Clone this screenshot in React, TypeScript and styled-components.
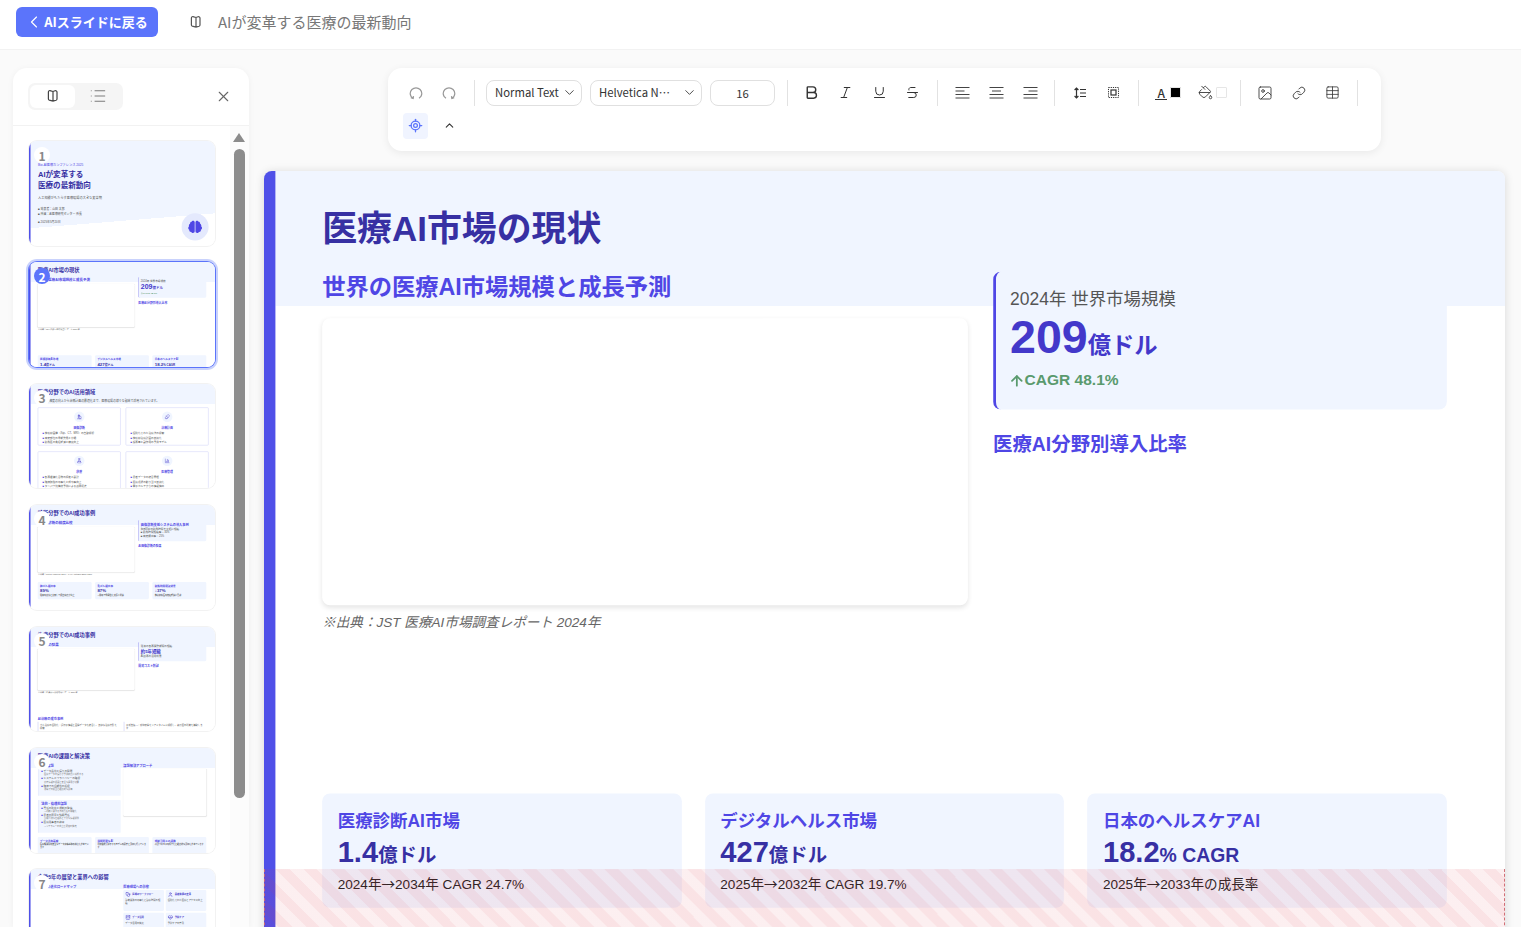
import React from "react";
import styled, { createGlobalStyle } from "styled-components";
import {
  ArrowUp, Bold, ChevronDown, ChevronLeft, ChevronUp, Italic,
  Link, List, LocateFixed, PaintBucket, Strikethrough, Table, Underline, X, Image as ImageIcon, Microscope, Pill, FlaskConical, BarChart3,
  Stethoscope, User, Database, HeartPulse,
} from "lucide-react";
import { FaBrain } from "react-icons/fa";

const UI_FONT = `"Noto Sans CJK JP", "Noto Sans", sans-serif`;
const SLIDE_FONT = `"Liberation Sans", "Noto Sans CJK JP", sans-serif`;

const GlobalStyle = createGlobalStyle`
  html, body { margin: 0; height: 100%; overflow: hidden; background: #fafafa; }
  * { box-sizing: border-box; }
  #root { height: 100%; }
`;

/* page shell */
const Page = styled.div`
  height: 927px;
  display: flex;
  flex-direction: column;
  overflow: hidden;
  font-family: ${UI_FONT};
`;
const Header = styled.header`
  flex: 0 0 50px;
  display: flex;
  align-items: center;
  padding: 0 16px 6px;
  background: #fff;
  border-bottom: 1px solid #f2f2f2;
`;
const BackButton = styled.button`
  width: 142px;
  height: 30px;
  display: flex;
  align-items: center;
  justify-content: center;
  padding: 0 2px 0 0;
  border: 0;
  border-radius: 6px;
  background: #5b74fb;
  color: #fff;
  font: 700 13px ${UI_FONT};
`;
const DocIcon = styled.span`
  display: flex;
  margin: 0 15px 0 31px;
  color: #555;
`;
const DocTitle = styled.span`
  font-size: 15px;
  color: #777;
`;
const Body = styled.div`
  flex: 1;
  min-height: 0;
  display: flex;
  padding: 0 1px 0 13px;
`;

/* left panel */
const Panel = styled.aside`
  flex: 0 0 236px;
  margin-top: 18px;
  display: flex;
  flex-direction: column;
  background: #fff;
  border-radius: 14px 14px 0 0;
  box-shadow: 0 1px 6px rgba(0, 0, 0, 0.05);
`;
const PanelHead = styled.div`
  flex: 0 0 58px;
  display: flex;
  align-items: center;
  justify-content: space-between;
  padding: 0 17px 1px 15px;
  border-bottom: 1px solid #f2f2f2;
  color: #666;
`;
const Tabs = styled.div`
  width: 95px;
  height: 27px;
  display: flex;
  padding: 2px;
  background: #f5f5f5;
  border-radius: 7px;
`;
const Tab = styled.div<{ $active?: boolean }>`
  flex: ${(p) => (p.$active ? "0 0 45px" : 1)};
  display: flex;
  align-items: center;
  justify-content: center;
  border-radius: 6px;
  background: ${(p) => (p.$active ? "#fff" : "transparent")};
  color: ${(p) => (p.$active ? "#444" : "#777")};
`;
const PanelBody = styled.div`
  flex: 1;
  min-height: 0;
  display: flex;
  overflow: hidden;
`;
const ThumbList = styled.div`
  flex: 0 0 217px;
  display: flex;
  flex-direction: column;
  gap: 16.8px;
  padding: 15px 0 0 16px;
`;
const ScrollTrack = styled.div`
  flex: 1;
  display: flex;
  flex-direction: column;
  align-items: center;
  padding: 7px 1px 0 0;
  background: #fcfcfc;
`;
const ScrollArrow = styled.div`
  width: 0;
  height: 0;
  border-left: 6px solid transparent;
  border-right: 6px solid transparent;
  border-bottom: 9px solid #8c8c8c;
`;
const ScrollThumb = styled.div`
  width: 11px;
  height: 649px;
  margin-top: 7px;
  background: #8c8c8c;
  border-radius: 6px;
`;
const Thumb = styled.div<{ $selected?: boolean }>`
  position: relative;
  flex: 0 0 104.6px;
  min-height: 0;
  width: 186px;
  border-radius: 8px;
  background: #fff;
  box-shadow: ${(p) =>
    p.$selected ? "0 0 0 1px #5b74fb, 0 0 0 3px #c9d2fc" : "0 0 0 1px #f2f2f2"};
`;
const ThumbClip = styled.div`
  height: 104.6px;
  border-radius: 8px;
  overflow: hidden;
`;
const Badge = styled.div<{ $selected?: boolean }>`
  position: absolute;
  left: 5px;
  top: 6px;
  width: 16px;
  height: 16px;
  display: flex;
  align-items: center;
  justify-content: center;
  border-radius: 50%;
  background: ${(p) => (p.$selected ? "#5b74fb" : "#fff")};
  color: ${(p) => (p.$selected ? "#fff" : "#888")};
  font: 700 12px ${UI_FONT};
`;

/* editor column */
const Editor = styled.main`
  flex: 1;
  min-width: 0;
  display: flex;
  flex-direction: column;
  align-items: center;
  padding-top: 18px;
`;
const Toolbar = styled.div`
  width: 993px;
  flex: 0 0 83px;
  display: flex;
  flex-direction: column;
  gap: 7px;
  padding: 12px 14px 12px 14.7px;
  background: #fff;
  border-radius: 14px;
  box-shadow: 0 2px 8px rgba(0, 0, 0, 0.07);
`;
const ToolRow = styled.div`
  height: 26px;
  display: flex;
  align-items: center;
  gap: 8px;
`;
const ToolButton = styled.div<{ $active?: boolean; $muted?: boolean }>`
  flex: 0 0 25.7px;
  height: 26px;
  padding-bottom: 1px;
  display: flex;
  align-items: center;
  justify-content: center;
  border-radius: 4px;
  background: ${(p) => (p.$active ? "#f0f4ff" : "transparent")};
  color: ${(p) => (p.$active ? "#5b74fb" : p.$muted ? "#999" : "#333")};
`;
const ToolDivider = styled.div`
  flex: 0 0 1px;
  height: 26px;
  margin: 0 3.5px;
  background: #e2e2e2;
`;
const Select = styled.div<{ $width: number }>`
  flex: 0 0 ${(p) => p.$width}px;
  height: 26px;
  display: flex;
  align-items: center;
  justify-content: space-between;
  padding: 0 4px 2px 8px;
  border: 1px solid #e0e0e0;
  border-radius: 8px;
  font-size: 11.3px;
  color: #333;
`;
const SelectText = styled.span<{ $width?: number }>`
  width: ${(p) => (p.$width ? `${p.$width}px` : "auto")};
  white-space: nowrap;
  overflow: hidden;
  text-overflow: ellipsis;
`;
const SizeInput = styled.div`
  flex: 0 0 65px;
  height: 26px;
  padding-top: 1px;
  border: 1px solid #e0e0e0;
  border-radius: 8px;
  text-align: center;
  font-size: 11.3px;
  line-height: 22px;
  color: #333;
`;
const ColorButton = styled.div`
  flex: 0 0 35px;
  height: 26px;
  padding: 0 0 1px 5px;
  display: flex;
  align-items: center;
  gap: 3px;
  color: #333;
`;
const LetterA = styled.span`
  width: 12px;
  height: 14px;
  border-bottom: 1.5px solid #333;
  text-align: center;
  font-size: 12px;
  font-weight: 500;
  line-height: 13px;
`;
const Swatch = styled.span<{ $color: string }>`
  width: 11px;
  height: 11px;
  background: ${(p) => p.$color};
  border: 1px solid #e6e6e6;
  border-radius: 1px;
`;

/* slides: authored at 1280x720 and scaled down */
const SlideFrame = styled.div<{ $zoom: number; $main?: boolean }>`
  position: relative;
  transform: scale(${(p) => p.$zoom});
  transform-origin: 0 0;
  width: 1280px;
  min-height: 720px;
  padding: 36px 60px 48px 48px;
  background: linear-gradient(#f0f5ff 139px, #fff 139px);
  border-left: 12px solid #4f50e8;
  border-radius: 8px 8px 0 0;
  font-family: ${SLIDE_FONT};
  color: #222;
  box-shadow: ${(p) => (p.$main ? "0 2px 10px rgba(0, 0, 0, 0.14)" : "none")};
`;
const MainSlideWrap = styled.div`
  flex: 0 0 698px;
  width: 1241px;
  margin-top: 20px;
`;
const OverflowZone = styled.div`
  position: absolute;
  top: 720px;
  left: -12px;
  right: 0;
  bottom: -100px;
  border: 1px dashed #cf6a72;
  border-top: 0;
  background: repeating-linear-gradient(45deg, rgba(220, 53, 69, 0.14) 0 10px, rgba(220, 53, 69, 0.08) 10px 20px);
`;
const Title = styled.h1`
  margin: 0;
  height: 68px;
  font-size: 36px;
  line-height: 48px;
  font-weight: 700;
  color: #3730a3;
`;
const Columns = styled.div<{ $height: number }>`
  height: ${(p) => p.$height}px;
  display: grid;
  grid-template-columns: 666px 468px;
  gap: 26px;
`;
const Column = styled.div`
  min-width: 0;
`;
const SubHead = styled.h2`
  margin: 0 0 17px;
  font-size: 24px;
  line-height: 31px;
  font-weight: 700;
  color: #4f46e5;
`;
const SideHead = styled.h3`
  margin: 23px 0 0;
  font-size: 20px;
  line-height: 26px;
  font-weight: 700;
  color: #4f46e5;
`;
const ChartCard = styled.div<{ $height: number }>`
  height: ${(p) => p.$height}px;
  background: #fff;
  border-radius: 8px;
  box-shadow: 0 2px 6px rgba(0, 0, 0, 0.1);
`;
const Caption = styled.p`
  margin: 8px 0 0;
  font-size: 14px;
  line-height: 18px;
  font-style: italic;
  color: #666;
`;
const StatCard = styled.div`
  padding: 16px 16px 19px 14.5px;
  background: #f0f5ff;
  border-left: 3px solid #4f46e5;
  border-radius: 8px;
`;
const StatLabel = styled.div`
  margin-bottom: 2px;
  font-size: 18px;
  line-height: 24px;
  color: #555;
`;
const StatValue = styled.div`
  font-size: 48px;
  line-height: 52px;
  font-weight: 700;
  color: #4338ca;
`;
const StatUnit = styled.span`
  font-size: 24px;
`;
const StatTrend = styled.div`
  display: flex;
  align-items: center;
  margin: -1px 0 0 -2px;
  font-size: 16px;
  line-height: 22px;
  font-weight: 700;
  color: #5a9a6e;
`;
const CardRow = styled.div`
  display: grid;
  grid-template-columns: repeat(3, 1fr);
  gap: 24px;
`;
const MetricCard = styled.div`
  height: 118px;
  padding: 17px 16px 0;
  background: #f0f5ff;
  border-radius: 8px;
`;
const MetricTitle = styled.div`
  font-size: 18px;
  line-height: 24px;
  font-weight: 700;
  color: #4f46e5;
`;
const MetricValue = styled.div`
  margin-top: 2px;
  font-size: 30px;
  line-height: 36px;
  font-weight: 700;
  color: #3730a3;
`;
const MetricUnit = styled.span`
  font-size: 20px;
`;
const MetricNote = styled.div`
  margin-top: 1px;
  font-size: 14px;
  line-height: 20px;
  color: #222;
`;
const NoteArrow = styled.span`
  font-family: "Noto Sans CJK JP", sans-serif;
`;

/* parts that only appear in the other thumbnails */
const CoverFrame = styled(SlideFrame)`
  padding: 152px 60px 0 50px;
  background: linear-gradient(175.4deg, #f0f5ff 73%, #fff 73%);
`;
const CoverKicker = styled.div`
  font-size: 22px;
  line-height: 26px;
  color: #4f46e5;
`;
const CoverTitle = styled.div`
  margin-top: 16px;
  font-size: 52px;
  line-height: 76px;
  font-weight: 700;
  color: #3730a3;
`;
const CoverLead = styled.div`
  margin-top: 28px;
  font-size: 22px;
  line-height: 30px;
  color: #555;
`;
const CoverMeta = styled.div`
  margin-top: 46px;
  font-size: 20px;
  line-height: 36px;
  color: #555;
`;
const CoverDate = styled(CoverMeta)`
  margin-top: 18px;
`;
const CoverBadge = styled.div`
  position: absolute;
  right: 44px;
  bottom: 36px;
  width: 186px;
  height: 186px;
  display: flex;
  align-items: center;
  justify-content: center;
  border-radius: 50%;
  background: #e4e9fd;
  color: #4f46e5;
`;
const Lead = styled.div`
  margin: 16px 0 34px;
  font-size: 20px;
  color: #555;
`;
const FieldGrid = styled.div`
  display: grid;
  grid-template-columns: 571px 571px;
  gap: 41px 34px;
`;
const FieldCard = styled.div`
  height: 262px;
  padding: 26px 30px 0;
  border: 3px solid #c7c9f5;
  border-radius: 8px;
  text-align: center;
`;
const FieldIcon = styled.div`
  width: 72px;
  height: 72px;
  margin: 0 auto;
  display: flex;
  align-items: center;
  justify-content: center;
  border-radius: 50%;
  background: #f0f5ff;
  color: #4338ca;
`;
const FieldName = styled.div`
  margin: 24px 0 10px;
  font-size: 20px;
  font-weight: 700;
  color: #4f46e5;
`;
const Bullet = styled.div`
  font-size: 18px;
  line-height: 30px;
  text-align: left;
  color: #555;
  &::before { content: "■ "; color: #4f46e5; }
`;
const BulletNote = styled.div`
  padding-left: 20px;
  font-size: 15px;
  line-height: 20px;
  color: #777;
`;
const BlockHead = styled.div`
  font-size: 22px;
  font-weight: 700;
  color: #4f46e5;
`;
const SmallStat = styled.div`
  font-size: 30px;
  font-weight: 700;
  color: #4338ca;
`;
const TwoCases = styled.div`
  display: grid;
  grid-template-columns: 1fr 1fr;
  gap: 24px;
  margin-top: 8px;
`;
const CaseCard = styled.div`
  padding: 12px;
  border-left: 4px solid #c7c9f5;
  font-size: 16px;
  line-height: 24px;
  color: #555;
`;
const SplitGrid = styled.div`
  display: grid;
  grid-template-columns: 571px 571px;
  gap: 18px;
`;
const IssueBlock = styled.div<{ $height: number }>`
  height: ${(p) => p.$height}px;
  margin-bottom: 28px;
  padding: 8px 20px;
  background: #f0f5ff;
  border-left: 4px solid #c7c9f5;
  border-radius: 6px;
`;
const ImpactGrid = styled.div`
  display: grid;
  grid-template-columns: 1fr 1fr;
  gap: 12px;
  margin-top: 8px;
`;
const ImpactCard = styled.div`
  height: 145px;
  padding: 14px;
  background: #f0f5ff;
  border-radius: 8px;
  font-size: 16px;
  line-height: 24px;
  color: #555;
`;
const ImpactHead = styled.div`
  display: flex;
  align-items: center;
  gap: 12px;
  margin-bottom: 8px;
  font-weight: 700;
  color: #4338ca;
`;
const ChartGap = styled.div`
  margin-top: 8px;
`;

/* drawn icons */
const BookIcon = () => (
  <svg width="14" height="14" viewBox="0 0 14 14" fill="none" stroke="currentColor" strokeWidth="1.2">
    <path d="M7 2.5 4 1.7c-.9-.2-1.6.3-1.6 1.2v7c0 .6.3 1 .9 1.2L7 12.2M7 2.5l2-.7c1-.3 2 .3 2 1.3v7c0 .6-.3 1-.9 1.2L7 12.2M7 2.5v9.7" />
  </svg>
);
const HistoryIcon = ({ flip }: { flip?: boolean }) => (
  <svg width="14" height="14" viewBox="0 0 14 14" fill="none" stroke="currentColor" strokeWidth="1.2" style={flip ? { transform: "scaleX(-1)" } : undefined}>
    <path d="M4 12.2c-1.7-1-2.8-2.7-2.8-4.6a5.8 5.8 0 0 1 11.6 0c0 1.9-1.1 3.6-2.8 4.6" />
    <path d="M1.8 11.6 4.2 12.4l.3-2.3" />
  </svg>
);
const AlignIcon = ({ side }: { side: "left" | "center" | "right" }) => {
  const x1 = side === "left" ? 0.5 : side === "center" ? 3 : 5.5;
  return (
    <svg width="15" height="13" viewBox="0 0 15 13" fill="none" stroke="#444" strokeWidth="1.1">
      <path d={`M.5 1.5h14M${x1} 5h9M.5 8.5h14M.5 12h14`} />
    </svg>
  );
};
const LineSpacingIcon = () => (
  <svg width="12" height="12" viewBox="0 0 12 12" fill="none" stroke="currentColor" strokeWidth="1.2">
    <path d="M2.5 1v10M.6 3 2.5 1l1.9 2M.6 9l1.9 2 1.9-2M6 2.5h6M6 6h6M6 9.5h6" />
  </svg>
);
const SpacingBoxIcon = () => (
  <svg width="11" height="11" viewBox="0 0 11 11" fill="none" stroke="currentColor" strokeWidth="1">
    <rect x=".5" y=".5" width="10" height="10" strokeDasharray="1.2 1" />
    <rect x="3" y="3" width="5" height="5" strokeWidth="1.2" />
  </svg>
);

const ChartSlide = ({
  zoom, title, sub, stat, sideHead, caption, chartHeight, columnsHeight, children, main,
}: {
  zoom: number; title: string; sub: string; stat: React.ReactNode; sideHead: string; caption: string;
  chartHeight: number; columnsHeight: number; children: React.ReactNode; main?: boolean;
}) => (
  <SlideFrame $zoom={zoom} $main={main}>
    <Title>{title}</Title>
    <Columns $height={columnsHeight}>
      <Column>
        <SubHead>{sub}</SubHead>
        <ChartCard $height={chartHeight} />
        <Caption>{caption}</Caption>
      </Column>
      <Column>
        <StatCard>{stat}</StatCard>
        <SideHead>{sideHead}</SideHead>
      </Column>
    </Columns>
    {children}
    {main && <OverflowZone />}
  </SlideFrame>
);

const MarketSlide = ({ zoom, main }: { zoom: number; main?: boolean }) => (
  <ChartSlide
    zoom={zoom}
    main={main}
    title="医療AI市場の現状"
    sub="世界の医療AI市場規模と成長予測"
    sideHead="医療AI分野別導入比率"
    caption="※出典：JST 医療AI市場調査レポート 2024年"
    chartHeight={296}
    columnsHeight={537.6}
    stat={
      <>
        <StatLabel>2024年 世界市場規模</StatLabel>
        <StatValue>209<StatUnit>億ドル</StatUnit></StatValue>
        <StatTrend><ArrowUp size={17} strokeWidth={2.6} />CAGR 48.1%</StatTrend>
      </>
    }
  >
    <CardRow>
      <MetricCard>
        <MetricTitle>医療診断AI市場</MetricTitle>
        <MetricValue>1.4<MetricUnit>億ドル</MetricUnit></MetricValue>
        <MetricNote>2024年<NoteArrow>→</NoteArrow>2034年 CAGR 24.7%</MetricNote>
      </MetricCard>
      <MetricCard>
        <MetricTitle>デジタルヘルス市場</MetricTitle>
        <MetricValue>427<MetricUnit>億ドル</MetricUnit></MetricValue>
        <MetricNote>2025年<NoteArrow>→</NoteArrow>2032年 CAGR 19.7%</MetricNote>
      </MetricCard>
      <MetricCard>
        <MetricTitle>日本のヘルスケアAI</MetricTitle>
        <MetricValue>18.2<MetricUnit>% CAGR</MetricUnit></MetricValue>
        <MetricNote>2025年<NoteArrow>→</NoteArrow>2033年の成長率</MetricNote>
      </MetricCard>
    </CardRow>
  </ChartSlide>
);

const THUMB_ZOOM = 186 / 1280;

const CoverSlide = () => (
  <CoverFrame $zoom={THUMB_ZOOM}>
    <CoverKicker>Bio-AI医療カンファレンス 2025</CoverKicker>
    <CoverTitle>AIが変革する<br />医療の最新動向</CoverTitle>
    <CoverLead>人工知能がもたらす医療現場の大きな変革期</CoverLead>
    <CoverMeta>■ 発表者：山田 太郎<br />■ 所属：AI医療研究センター 所長</CoverMeta>
    <CoverDate>■ 2025年5月20日</CoverDate>
    <CoverBadge><FaBrain size={96} /></CoverBadge>
  </CoverFrame>
);

const FIELDS = [
  { name: "画像診断", icon: <Microscope size={36} />, items: ["放射線画像（X線、CT、MRI）の自動解析", "病変部位の早期発見と分類", "読影医の負担軽減と精度向上"] },
  { name: "治療計画", icon: <Pill size={36} />, items: ["個別化された治療法の提案", "放射線治療計画の最適化", "投薬量と副作用の予測モデル"] },
  { name: "創薬", icon: <FlaskConical size={36} />, items: ["新薬候補化合物の探索と設計", "臨床試験の効率化と成功率向上", "タンパク質構造予測による創薬促進"] },
  { name: "医療管理", icon: <BarChart3 size={36} />, items: ["患者データの統合管理", "医療資源の割り当て最適化", "電子カルテからの情報抽出"] },
];

const FieldsSlide = () => (
  <SlideFrame $zoom={THUMB_ZOOM}>
    <Title as="div" style={{ height: 46 }}>医療分野でのAI活用領域</Title>
    <Lead>AIは診断精度の向上から治療計画の最適化まで、医療現場の様々な領域で活用されています。</Lead>
    <FieldGrid>
      {FIELDS.map((f) => (
        <FieldCard key={f.name}>
          <FieldIcon>{f.icon}</FieldIcon>
          <FieldName>{f.name}</FieldName>
          {f.items.map((i) => <Bullet key={i}>{i}</Bullet>)}
        </FieldCard>
      ))}
    </FieldGrid>
  </SlideFrame>
);

const DiagnosisSlide = () => (
  <ChartSlide
    zoom={THUMB_ZOOM}
    title="診断分野でのAI成功事例"
    sub="AI画像診断の精度比較"
    sideHead="AI画像診断の効果"
    caption="※出典：Nature Medicine 2024、JAMA Network Open 2023"
    chartHeight={310}
    columnsHeight={426}
    stat={
      <>
        <BlockHead>画像診断支援システムの導入事例</BlockHead>
        <StatLabel>胸部X線の読影時間を大幅に短縮</StatLabel>
        <StatLabel>■ 読影時間短縮率 ↓ 30%</StatLabel>
        <StatLabel>■ 病変検出率 ↑ 25%</StatLabel>
      </>
    }
  >
    <CardRow>
      <MetricCard><MetricTitle>肺がん検出率</MetricTitle><MetricValue>89%</MetricValue><MetricNote>従来の読影と比較して検出精度が向上</MetricNote></MetricCard>
      <MetricCard><MetricTitle>乳がん検出率</MetricTitle><MetricValue>87%</MetricValue><MetricNote>AI併用で偽陽性を大幅に削減</MetricNote></MetricCard>
      <MetricCard><MetricTitle>読影時間削減効果</MetricTitle><MetricValue>↓37%</MetricValue><MetricNote>放射線科医の負担軽減に貢献</MetricNote></MetricCard>
    </CardRow>
  </ChartSlide>
);

const TreatmentSlide = () => (
  <ChartSlide
    zoom={THUMB_ZOOM}
    title="治療分野でのAI成功事例"
    sub="AI創薬の効果"
    sideHead="開発コスト削減"
    caption="※出典：医薬品AI開発動向レポート 2024年"
    chartHeight={282}
    columnsHeight={508}
    stat={
      <>
        <StatLabel>従来の新薬開発期間の短縮</StatLabel>
        <SmallStat>約5年短縮</SmallStat>
        <StatLabel>AI創薬の活用効果</StatLabel>
      </>
    }
  >
    <BlockHead>AI治療の成功事例</BlockHead>
    <TwoCases>
      <CaseCard>がん治療の個別化：遺伝子情報と画像データを統合し、最適な治療方針を提案</CaseCard>
      <CaseCard>手術支援AI：術中映像をリアルタイムに解析し、執刀医の判断を補助します</CaseCard>
    </TwoCases>
  </ChartSlide>
);

const IssuesSlide = () => (
  <SlideFrame $zoom={THUMB_ZOOM}>
    <Title>医療AIの課題と解決策</Title>
    <SplitGrid>
      <Column>
        <BlockHead>技術的課題</BlockHead>
        <IssueBlock $height={193}>
          <Bullet>データ品質と偏りの問題</Bullet>
          <BulletNote>医療データの偏りが予測精度に影響する</BulletNote>
          <Bullet>システムとプライバシーの確保</Bullet>
          <BulletNote>患者情報の保護と安全な運用が必要</BulletNote>
          <Bullet>臨床での信頼性の担保</Bullet>
          <BulletNote>現場での検証と継続的な評価</BulletNote>
        </IssueBlock>
        <IssueBlock $height={227}>
          <BlockHead>法的・倫理的課題</BlockHead>
          <Bullet>責任の所在と規制の整備</Bullet>
          <BulletNote>AI判断に関する法的責任の明確化</BulletNote>
          <Bullet>患者の同意と説明責任</Bullet>
          <BulletNote>説明可能な仕組みと十分な情報提供</BulletNote>
          <Bullet>医療従事者の教育</Bullet>
          <BulletNote>AIリテラシーの向上と研修の拡充</BulletNote>
        </IssueBlock>
      </Column>
      <Column>
        <BlockHead>課題解決アプローチ</BlockHead>
        <ChartGap><ChartCard $height={324} /></ChartGap>
      </Column>
    </SplitGrid>
    <CardRow>
      <MetricCard><MetricTitle>データ共有基盤</MetricTitle><MetricNote>医療機関間の安全なデータ連携基盤の構築を進めています</MetricNote></MetricCard>
      <MetricCard><MetricTitle>説明可能なAI</MetricTitle><MetricNote>判断根拠を提示するモデルの開発と評価を行っています</MetricNote></MetricCard>
      <MetricCard><MetricTitle>規制当局との連携</MetricTitle><MetricNote>承認プロセスの標準化と継続的な評価を進めています</MetricNote></MetricCard>
    </CardRow>
  </SlideFrame>
);

const FutureSlide = () => (
  <SlideFrame $zoom={THUMB_ZOOM}>
    <Title>今後5年の展望と業界への影響</Title>
    <SplitGrid>
      <Column><BlockHead>AI技術の進化ロードマップ</BlockHead></Column>
      <Column>
        <BlockHead>医療現場への影響</BlockHead>
        <ImpactGrid>
          <ImpactCard><ImpactHead><Stethoscope size={36} />医師のワークフロー</ImpactHead>診断業務の効率化と診療時間の短縮</ImpactCard>
          <ImpactCard><ImpactHead><User size={36} />患者体験の変革</ImpactHead>個別化された医療とアクセス向上</ImpactCard>
          <ImpactCard><ImpactHead><Database size={36} />データ活用</ImpactHead>データ活用の拡大</ImpactCard>
          <ImpactCard><ImpactHead><HeartPulse size={36} />予防ケア</ImpactHead>予防ケアの普及</ImpactCard>
        </ImpactGrid>
      </Column>
    </SplitGrid>
  </SlideFrame>
);

const THUMBS = [
  <CoverSlide />,
  <MarketSlide zoom={THUMB_ZOOM} />,
  <FieldsSlide />,
  <DiagnosisSlide />,
  <TreatmentSlide />,
  <IssuesSlide />,
  <FutureSlide />,
];

export default function App() {
  return (
    <Page>
      <GlobalStyle />
      <Header>
        <BackButton><ChevronLeft size={20} strokeWidth={1.4} />AIスライドに戻る</BackButton>
        <DocIcon><BookIcon /></DocIcon>
        <DocTitle>AIが変革する医療の最新動向</DocTitle>
      </Header>
      <Body>
        <Panel>
          <PanelHead>
            <Tabs>
              <Tab $active><BookIcon /></Tab>
              <Tab><List size={18} strokeWidth={1.3} /></Tab>
            </Tabs>
            <X size={17} strokeWidth={1.5} />
          </PanelHead>
          <PanelBody>
            <ThumbList>
              {THUMBS.map((slide, i) => (
                <Thumb key={i} $selected={i === 1}>
                  <ThumbClip>{slide}</ThumbClip>
                  <Badge $selected={i === 1}>{i + 1}</Badge>
                </Thumb>
              ))}
            </ThumbList>
            <ScrollTrack>
              <ScrollArrow />
              <ScrollThumb />
            </ScrollTrack>
          </PanelBody>
        </Panel>
        <Editor>
          <Toolbar>
            <ToolRow>
              <ToolButton $muted><HistoryIcon /></ToolButton>
              <ToolButton $muted><HistoryIcon flip /></ToolButton>
              <ToolDivider />
              <Select $width={96}><SelectText>Normal Text</SelectText><ChevronDown size={15} strokeWidth={1.4} /></Select>
              <Select $width={112}><SelectText $width={74}>Helvetica Neue</SelectText><ChevronDown size={15} strokeWidth={1.4} /></Select>
              <SizeInput>16</SizeInput>
              <ToolDivider />
              <ToolButton><Bold size={17} strokeWidth={2} /></ToolButton>
              <ToolButton><Italic size={15} strokeWidth={1.6} /></ToolButton>
              <ToolButton><Underline size={15} strokeWidth={1.6} /></ToolButton>
              <ToolButton><Strikethrough size={15} strokeWidth={1.6} /></ToolButton>
              <ToolDivider />
              <ToolButton><AlignIcon side="left" /></ToolButton>
              <ToolButton><AlignIcon side="center" /></ToolButton>
              <ToolButton><AlignIcon side="right" /></ToolButton>
              <ToolDivider />
              <ToolButton><LineSpacingIcon /></ToolButton>
              <ToolButton><SpacingBoxIcon /></ToolButton>
              <ToolDivider />
              <ColorButton><LetterA>A</LetterA><Swatch $color="#000" /></ColorButton>
              <ColorButton><PaintBucket size={15} strokeWidth={1.4} /><Swatch $color="#fff" /></ColorButton>
              <ToolDivider />
              <ToolButton><ImageIcon size={16} strokeWidth={1.3} /></ToolButton>
              <ToolButton><Link size={14} strokeWidth={1.5} /></ToolButton>
              <ToolButton><Table size={15} strokeWidth={1.3} /></ToolButton>
              <ToolDivider />
            </ToolRow>
            <ToolRow>
              <ToolButton $active><LocateFixed size={15} strokeWidth={2} /></ToolButton>
              <ToolButton><ChevronUp size={13} strokeWidth={2} /></ToolButton>
            </ToolRow>
          </Toolbar>
          <MainSlideWrap>
            <MarketSlide zoom={1241 / 1280} main />
          </MainSlideWrap>
        </Editor>
      </Body>
    </Page>
  );
}
